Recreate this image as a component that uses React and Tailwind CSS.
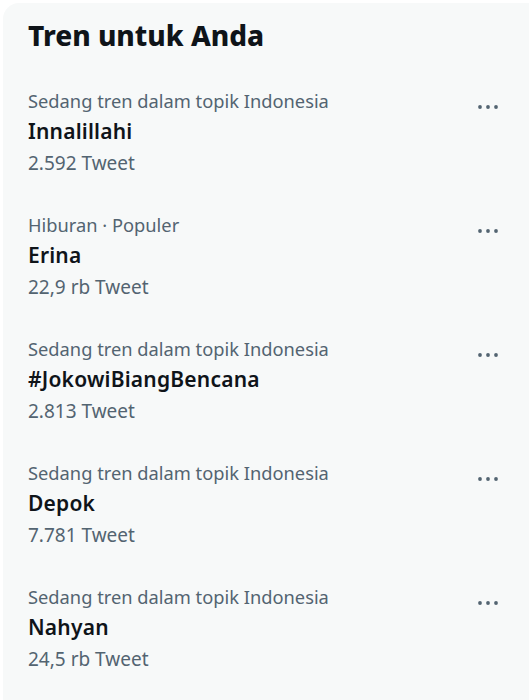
import React from 'react';

const trends = [
  { kategori: 'Sedang tren dalam topik Indonesia', nama: 'Innalillahi', jumlah: '2.592 Tweet' },
  { kategori: 'Hiburan · Populer', nama: 'Erina', jumlah: '22,9 rb Tweet' },
  { kategori: 'Sedang tren dalam topik Indonesia', nama: '#JokowiBiangBencana', jumlah: '2.813 Tweet' },
  { kategori: 'Sedang tren dalam topik Indonesia', nama: 'Depok', jumlah: '7.781 Tweet' },
  { kategori: 'Sedang tren dalam topik Indonesia', nama: 'Nahyan', jumlah: '24,5 rb Tweet' },
];

// ikon titik tiga
function Titik() {
  return (
    <svg width="24" height="8" viewBox="0 0 24 8" className="text-[#536471]">
      <circle cx="4" cy="4" r="1.9" fill="currentColor" />
      <circle cx="12" cy="4" r="1.9" fill="currentColor" />
      <circle cx="20" cy="4" r="1.9" fill="currentColor" />
    </svg>
  );
}

export default function App() {
  return (
    <div className="min-h-[700px] overflow-hidden bg-white pl-[3px] pt-[3px] font-['Noto_Sans',sans-serif]">
      <div className="min-h-[720px] rounded-tl-2xl bg-[#f7f9f9] pl-[25px] pt-[16px]">
        <h2 className="mb-[34px] text-[28px] font-extrabold leading-[32px] text-[#0f1419]">
          Tren untuk Anda
        </h2>

        {trends.map((t, i) => (
          <div key={i} className="flex h-[124px] pr-[29px]">
            <div className="flex-1">
              <p className="text-[18.3px] leading-[31px] text-[#536471]">{t.kategori}</p>
              <p className="text-[21px] font-semibold leading-[31px] tracking-[0.2px] text-[#0f1419]">{t.nama}</p>
              <p className="text-[19px] leading-[32px] text-[#536471]">{t.jumlah}</p>
            </div>
            <div className="pt-[18px]">
              <Titik />
            </div>
          </div>
        ))}
      </div>
    </div>
  );
}
